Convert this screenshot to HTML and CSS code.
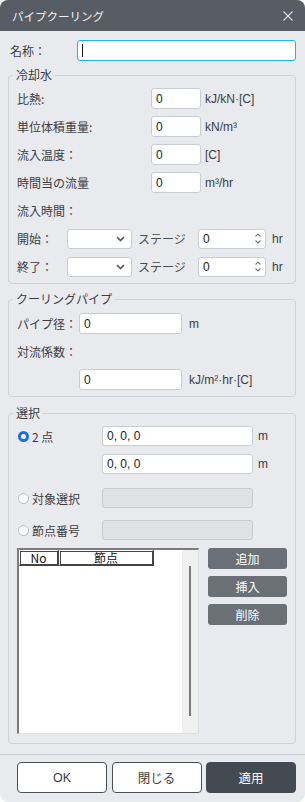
FILE: index.html
```html
<!DOCTYPE html>
<html lang="ja">
<head>
    <meta charset="UTF-8">
    <meta name="viewport" content="width=device-width, initial-scale=1.0">
    <title>パイプクーリング</title>
    <link rel="stylesheet" href="styles.css">
</head>
<body>

    <div class="dialog">
        <div class="titlebar">
            <span class="title">パイプクーリング</span>
            <svg class="close" width="10" height="10" viewBox="0 0 10 10">
                <path d="M0.5 0.5 L9.5 9.5 M9.5 0.5 L0.5 9.5" stroke="#e6e8eb" stroke-width="1.1" fill="none"/>
            </svg>
        </div>

        <div class="content">
            <div class="name-row">
                <span class="name-label">名称：</span>
                <div class="field name-field"><span class="caret"></span></div>
            </div>

            <fieldset class="group group-water">
                <legend>冷却水</legend>
                <div class="row">
                    <span class="lbl lbl-water">比熱:</span>
                    <input class="field num" type="text" value="0">
                    <span class="unit">kJ/kN·[C]</span>
                </div>
                <div class="row">
                    <span class="lbl lbl-water">単位体積重量:</span>
                    <input class="field num" type="text" value="0">
                    <span class="unit">kN/m³</span>
                </div>
                <div class="row">
                    <span class="lbl lbl-water">流入温度：</span>
                    <input class="field num" type="text" value="0">
                    <span class="unit">[C]</span>
                </div>
                <div class="row">
                    <span class="lbl lbl-water">時間当の流量</span>
                    <input class="field num" type="text" value="0">
                    <span class="unit">m³/hr</span>
                </div>
                <div class="row">
                    <span class="lbl">流入時間：</span>
                </div>
                <div class="row">
                    <span class="lbl lbl-stage">開始：</span>
                    <div class="field select">
                        <svg width="9" height="6" viewBox="0 0 9 6"><path d="M1 1 L4.5 4.5 L8 1" stroke="#555" stroke-width="1.6" fill="none"/></svg>
                    </div>
                    <span class="stage">ステージ</span>
                    <div class="field spin">
                        <span>0</span>
                        <svg width="8" height="13" viewBox="0 0 8 13"><path d="M1.5 4.5 L4 2 L6.5 4.5 M1.5 8.5 L4 11 L6.5 8.5" stroke="#777" stroke-width="1.1" fill="none"/></svg>
                    </div>
                    <span class="unit unit-hr">hr</span>
                </div>
                <div class="row">
                    <span class="lbl lbl-stage">終了：</span>
                    <div class="field select">
                        <svg width="9" height="6" viewBox="0 0 9 6"><path d="M1 1 L4.5 4.5 L8 1" stroke="#555" stroke-width="1.6" fill="none"/></svg>
                    </div>
                    <span class="stage">ステージ</span>
                    <div class="field spin">
                        <span>0</span>
                        <svg width="8" height="13" viewBox="0 0 8 13"><path d="M1.5 4.5 L4 2 L6.5 4.5 M1.5 8.5 L4 11 L6.5 8.5" stroke="#777" stroke-width="1.1" fill="none"/></svg>
                    </div>
                    <span class="unit unit-hr">hr</span>
                </div>
            </fieldset>

            <fieldset class="group group-pipe">
                <legend>クーリングパイプ</legend>
                <div class="row">
                    <span class="lbl lbl-pipe">パイプ径：</span>
                    <input class="field pipe-num" type="text" value="0">
                    <span class="unit unit-pipe">m</span>
                </div>
                <div class="row">
                    <span class="lbl">対流係数：</span>
                </div>
                <div class="row">
                    <span class="lbl lbl-pipe"></span>
                    <input class="field pipe-num" type="text" value="0">
                    <span class="unit unit-pipe">kJ/m²·hr·[C]</span>
                </div>
            </fieldset>

            <fieldset class="group group-select">
                <legend>選択</legend>
                <div class="row row-sel">
                    <span class="radio-lbl"><span class="radio checked"></span>2 点</span>
                    <input class="field coord" type="text" value="0, 0, 0">
                    <span class="unit unit-m">m</span>
                </div>
                <div class="row row-sel row-second">
                    <span class="radio-lbl"></span>
                    <input class="field coord" type="text" value="0, 0, 0">
                    <span class="unit unit-m">m</span>
                </div>
                <div class="row row-sel row-target">
                    <span class="radio-lbl"><span class="radio"></span>対象選択</span>
                    <div class="field coord disabled"></div>
                </div>
                <div class="row row-sel row-node">
                    <span class="radio-lbl"><span class="radio"></span>節点番号</span>
                    <div class="field coord disabled"></div>
                </div>

                <div class="list-area">
                    <div class="list">
                        <div class="list-body">
                            <div class="list-head">
                                <span class="col-no">No</span>
                                <span class="col-node">節点</span>
                            </div>
                        </div>
                        <div class="scrollbar"><span class="thumb"></span></div>
                    </div>
                    <div class="list-btns">
                        <button class="gray-btn">追加</button>
                        <button class="gray-btn">挿入</button>
                        <button class="gray-btn">削除</button>
                    </div>
                </div>
            </fieldset>
        </div>

        <div class="footer">
            <button class="foot-btn">OK</button>
            <button class="foot-btn">閉じる</button>
            <button class="foot-btn primary">適用</button>
        </div>
    </div>

</body>
</html>
```

FILE: styles.css
```css
body {
    margin: 0;
    background-color: #ffffff;
    font-family: "Liberation Sans", "Noto Sans CJK JP", sans-serif;
    font-size: 12px;
    color: #3a3d42;
}
.dialog {
    width: 305px;
    height: 802px;
    background-color: #e9eaee;
    border-radius: 8px;
    overflow: hidden;
    display: flex;
    flex-direction: column;
}
.titlebar {
    height: 31px;
    background-color: #575d65;
    display: flex;
    align-items: center;
    justify-content: space-between;
    padding: 0 12px 0 12px;
    flex-shrink: 0;
}
.title {
    color: #f2f3f5;
    font-size: 11.5px;
    font-family: "Noto Sans CJK JP", sans-serif;
}
.close {
    display: block;
    margin-top: 1px;
}
.content {
    padding: 9px 9px 0 8px;
    flex: 1;
}

/* name */
.name-row {
    display: flex;
    align-items: center;
    height: 21px;
}
.name-label {
    width: 69px;
    padding-left: 2px;
    box-sizing: border-box;
    font-family: "Noto Sans CJK JP", sans-serif;
}
.field {
    box-sizing: border-box;
    height: 21px;
    border: 1px solid #c9ccd1;
    border-radius: 3px;
    background-color: #ffffff;
    font-family: "Liberation Sans", "Noto Sans CJK JP", sans-serif;
    font-size: 12px;
    color: #222;
    padding: 0 4px;
    margin: 0;
    outline: none;
}
.name-field {
    width: 219px;
    border: 1px solid #19b6ef;
    display: flex;
    align-items: center;
}
.caret {
    display: block;
    width: 1px;
    height: 13px;
    background-color: #111;
}

/* groups */
.group {
    border: 1px solid #cfd2d7;
    border-radius: 4px;
    margin: 6px 0 0 0;
    padding: 5px 8px 6px 8px;
    min-width: 0;
}
.group legend {
    padding: 0 3px;
    margin-left: -4px;
    line-height: 16px;
    font-family: "Noto Sans CJK JP", sans-serif;
    color: #3a3d42;
}
.group-pipe {
    margin-top: 7px;
    padding-top: 6px;
}
.group-select {
    margin-top: 8px;
    padding-bottom: 9px;
}
.row {
    display: flex;
    align-items: center;
    height: 21px;
    margin-bottom: 7px;
}
.row:last-child {
    margin-bottom: 0;
}
.lbl {
    font-family: "Noto Sans CJK JP", sans-serif;
    white-space: nowrap;
}
.lbl-water {
    width: 134px;
    flex-shrink: 0;
}
.num {
    width: 50px;
}
.unit {
    margin-left: 4px;
    color: #3a3d42;
}
.lbl-stage {
    width: 50px;
    flex-shrink: 0;
}
.select {
    width: 65px;
    height: 20px;
    display: flex;
    align-items: center;
    justify-content: flex-end;
    padding-right: 6px;
}
.select svg {
    display: block;
}
.stage {
    width: 66px;
    flex-shrink: 0;
    padding-left: 6px;
    box-sizing: border-box;
    font-family: "Noto Sans CJK JP", sans-serif;
    color: #4a4d52;
}
.spin {
    width: 68px;
    height: 20px;
    display: flex;
    align-items: center;
    justify-content: space-between;
    padding-right: 3px;
}
.spin svg {
    display: block;
}
.unit-hr {
    margin-left: 6px;
}

.lbl-pipe {
    width: 62px;
    flex-shrink: 0;
}
.pipe-num {
    width: 103px;
}
.unit-pipe {
    margin-left: 7px;
}

/* select group */
.row-sel {
    height: 20px;
    margin-bottom: 8px;
}
.row-sel .field {
    height: 20px;
}
.row-second {
    margin-bottom: 14px;
}
.row-target {
    margin-bottom: 12px;
}
.row-node {
    margin-bottom: 8px;
}
.radio-lbl {
    width: 84px;
    flex-shrink: 0;
    display: flex;
    align-items: center;
    font-family: "Noto Sans CJK JP", sans-serif;
    margin-left: 1px;
}
.radio {
    box-sizing: border-box;
    width: 11px;
    height: 11px;
    border-radius: 50%;
    border: 1px solid #b9bcc2;
    background-color: #ffffff;
    margin-right: 3px;
}
.radio.checked {
    border: 3px solid #1a6fe6;
}
.coord {
    width: 151px;
}
.unit-m {
    margin-left: 5px;
}
.disabled {
    background-color: #dfe1e5;
    border-color: #c8cbd0;
}

.list-area {
    display: flex;
    align-items: flex-start;
}
.list {
    box-sizing: border-box;
    width: 183px;
    height: 186px;
    border-top: 2px solid #7b7b7b;
    border-left: 2px solid #7b7b7b;
    border-right: 1px solid #e0e0e0;
    border-bottom: 1px solid #e0e0e0;
    background-color: #ffffff;
    display: flex;
}
.list-body {
    flex: 1;
}
.list-head {
    display: flex;
    width: 135px;
    height: 16px;
    font-family: "Noto Sans CJK JP", sans-serif;
    font-size: 12px;
    color: #111;
}
.list-head span {
    box-sizing: border-box;
    border: 1px solid #fff;
    border-right: 2px solid #444;
    border-bottom: 2px solid #444;
    box-shadow: inset 1px 1px 0 #444;
    text-align: center;
    line-height: 13px;
}
.col-no {
    width: 40px;
}
.col-node {
    width: 95px;
}
.scrollbar {
    width: 16px;
    background-color: #f0f0f0;
    display: flex;
    justify-content: center;
    padding-top: 16px;
    padding-bottom: 17px;
}
.thumb {
    display: block;
    width: 2px;
    background-color: #7a7a7a;
}
.list-btns {
    margin-left: 9px;
    display: flex;
    flex-direction: column;
    gap: 7px;
}
.gray-btn {
    width: 79px;
    height: 21px;
    border: none;
    border-radius: 3px;
    background-color: #6b7077;
    color: #ffffff;
    font-family: "Noto Sans CJK JP", sans-serif;
    font-size: 12px;
    padding: 0;
    cursor: pointer;
}

/* footer */
.footer {
    border-top: 1px solid #c9ccd1;
    margin-top: 9px;
    padding: 7px 9px 9px 17px;
    display: flex;
    gap: 4.5px;
}
.foot-btn {
    width: 90px;
    height: 31px;
    border: 1px solid #4a4f57;
    border-radius: 4px;
    background-color: #ffffff;
    color: #3a3d42;
    font-family: "Liberation Sans", "Noto Sans CJK JP", sans-serif;
    font-size: 12.5px;
    padding: 0;
    cursor: pointer;
}
.foot-btn.primary {
    background-color: #444a52;
    border-color: #444a52;
    color: #ffffff;
}
```
